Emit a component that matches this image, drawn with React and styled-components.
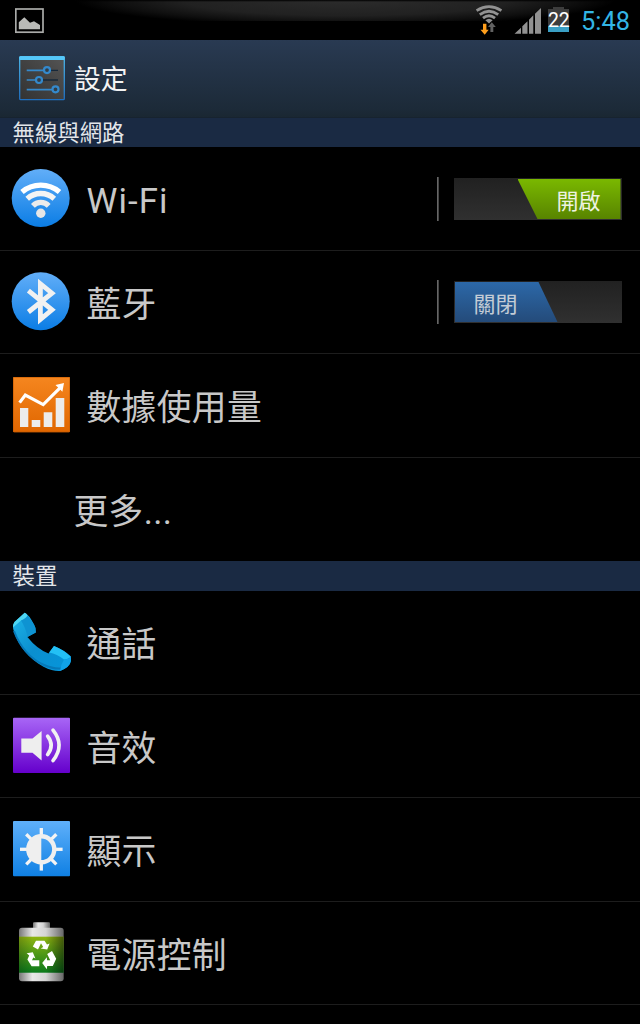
import React from 'react';
import styled, { createGlobalStyle } from 'styled-components';

const GlobalStyle = createGlobalStyle`
  html, body { margin: 0; background: #000; }
  body { font-family: Roboto, "Noto Sans CJK TC", sans-serif; overflow: hidden; }
  svg { display: block; flex: none; }
`;

const Screen = styled.main`
  width: 640px;
  height: 1024px;
  overflow: hidden;
  background: #000;
  display: flex;
  flex-direction: column;
`;

const StatusBar = styled.header`
  height: 40px;
  flex: none;
  box-sizing: border-box;
  display: flex;
  align-items: flex-start;
  justify-content: space-between;
  padding: 0 10px 0 15px;
  background:
    linear-gradient(#000, transparent 2px),
    linear-gradient(transparent 21px, #000 21px),
    radial-gradient(ellipse 270px 26px at 345px 0, #2c2c2c 0%, #212121 60%, rgba(18, 18, 18, 0.8) 85%, transparent 100%),
    #000;
`;

const StatusIcons = styled.div`
  display: flex;
  align-items: flex-start;
`;

const Clock = styled.time`
  width: 49px;
  margin-left: 12px;
  padding-top: 6px;
  font-size: 25.4px;
  line-height: 30px;
  color: #33b5e5;
  white-space: nowrap;
`;

const ActionBar = styled.div`
  height: 78px;
  flex: none;
  box-sizing: border-box;
  display: flex;
  align-items: flex-start;
  gap: 9px;
  padding: 16px 19px 0;
  background: linear-gradient(#293a52, #1c2a38 90%, #1a2732);
  border-bottom: 1px solid #17232f;
`;

const Title = styled.h1`
  margin: 0;
  font-size: 26.8px;
  line-height: 48px;
  font-weight: 400;
  color: #f3f3f3;
`;

const SectionHeader = styled.h2`
  margin: 0;
  height: ${p => p.$height}px;
  flex: none;
  padding-left: 12.5px;
  font-size: 22.4px;
  line-height: 31px;
  font-weight: 400;
  color: #e3e6ea;
  background: #1a2a43;
`;

const Row = styled.div`
  height: ${p => p.$height}px;
  flex: none;
  box-sizing: border-box;
  display: flex;
  align-items: flex-start;
  padding: 19px 18.5px 0 ${p => (p.$indent ? 73.5 : 9)}px;
  border-bottom: 1px solid ${p => (p.$last ? 'transparent' : '#1d1d1d')};
`;

const Label = styled.span`
  flex: 1;
  margin-left: ${p => (p.$indent ? 0 : 13.5)}px;
  font-size: 34.8px;
  line-height: 71px;
  letter-spacing: ${p => (p.$latin ? 1.1 : 0.3)}px;
  color: #c8c8c8;
`;

const Separator = styled.span`
  width: 2px;
  height: 44px;
  margin: ${p => (p.$on ? 11 : 10)}px 15px 0 0;
  background: linear-gradient(90deg, #777, #333);
`;

const Track = styled.span`
  width: 168px;
  height: 42px;
  margin-top: ${p => (p.$on ? 12 : 11)}px;
  box-sizing: border-box;
  display: flex;
  justify-content: ${p => (p.$on ? 'flex-end' : 'flex-start')};
  padding: 1px;
  background: linear-gradient(#212121, #303030);
`;

const Thumb = styled.span`
  width: 103px;
  box-sizing: border-box;
  padding-left: ${p => (p.$on ? 39 : 19)}px;
  font-size: 22px;
  line-height: 45px;
  color: ${p => (p.$on ? '#eef3e0' : '#c3ccd6')};
  background: ${p => (p.$on ? 'linear-gradient(#7ab800, #588400)' : 'linear-gradient(#2c68a8, #244b7a)')};
  clip-path: ${p => (p.$on ? 'polygon(0 0, 100% 0, 100% 40px, 20px 40px)' : 'polygon(0 0, 84px 0, 100% 40px, 0 40px)')};
`;

const Vertical = ({ id, from, to }) => (
  <linearGradient id={id} x1="0" y1="0" x2="0" y2="1">
    <stop offset="0" stopColor={from} />
    <stop offset="1" stopColor={to} />
  </linearGradient>
);

const IconBase = ({ children }) => (
  <svg width="64" height="64" viewBox="0 0 64 64">{children}</svg>
);

const WifiIcon = () => (
  <IconBase>
    <Vertical id="wifiBg" from="#62aef8" to="#0b7de5" />
    <circle cx="31.7" cy="32" r="29" fill="url(#wifiBg)" />
    <g fill="none" stroke="#f4f4f4" strokeWidth="5.3">
      <path d="M13 26A29 29 0 0 1 50.5 26" stroke="#fff" />
      <path d="M18.2 32.8A20 20 0 0 1 45.3 32.8" />
      <path d="M23.9 39.8A11 11 0 0 1 39.7 39.8" stroke="#ebebeb" />
    </g>
    <circle cx="31.8" cy="47.3" r="4.7" fill="#e6e6e6" />
  </IconBase>
);

const BluetoothIcon = () => (
  <IconBase>
    <Vertical id="btBg" from="#62aef8" to="#0b7de5" />
    <circle cx="31.7" cy="31.3" r="29" fill="url(#btBg)" />
    <path d="M19.4 20.7L43 39.8L31.4 49.4V13.7L43 23.2L19.4 42" fill="none" stroke="#f1f1f1" strokeWidth="4.8" />
  </IconBase>
);

const DataIcon = () => (
  <IconBase>
    <Vertical id="dataBg" from="#f5861f" to="#e06600" />
    <rect x="4" y="4" width="57" height="55.3" rx="1" fill="url(#dataBg)" />
    <rect x="4.5" y="4.5" width="56" height="54.3" rx="1" fill="none" stroke="#c85c00" strokeOpacity=".6" />
    <path d="M10.6 29.6L16.3 22L34.2 31.6L51.5 14.3" fill="none" stroke="#fff" strokeWidth="3.2" />
    <path d="M55 10L46.5 12L53.4 18.8Z" fill="#fff" />
    <path d="M11 35h8.3v19H11zM22.7 47h8.6v7h-8.6zM34.7 39.3h8.6V54h-8.6zM46.7 25h8.6v29h-8.6z" fill="#ececec" />
  </IconBase>
);

const PhoneIcon = () => (
  <IconBase>
    <linearGradient id="phoneBody" x1="0" y1="0" x2="1" y2="1">
      <stop offset="0" stopColor="#1eb3e8" />
      <stop offset=".5" stopColor="#0b8fcf" />
      <stop offset="1" stopColor="#0596dc" />
    </linearGradient>
    <path d="M15.7 2.7L5.5 12Q3.2 15.5 4.5 20C8 34 20 49 34.5 56.7Q44 61.5 51 61Q61 57 62 51V46.5Q55 40 45 36L39.5 43.5Q28 39 18.4 27L26.8 22.5Q27.2 18 25 14.5Q20 4.5 15.7 2.7Z" fill="url(#phoneBody)" />
    <path d="M15.7 2.7L5.5 12Q3.8 14.5 4 17.5L12 10.5Q17.5 8.5 18.5 5.5Q17.5 3.5 15.7 2.7Z" fill="#4ed6f2" />
    <path d="M45 36L40.2 42.6Q48 44 55 49.5Q60 49 61.5 46.5Q55 40 45 36Z" fill="#23c0f5" />
    <path d="M18.5 5.5Q17 8.5 12 10.5Q17 18 18.4 27L26.8 22.5Q27.2 18 25 14.5Z" fill="#0e93d2" />
    <path d="M5 21C11 37 22 49 35 55Q44 59 52 58.5" fill="none" stroke="#0679b9" strokeWidth="2" />
    <path d="M61.8 47V51Q61 57 51 61Q52 54 55 49.5Q60 49 61.8 47Z" fill="#10a3e8" />
  </IconBase>
);

const SoundIcon = () => (
  <IconBase>
    <Vertical id="soundBg" from="#a866f6" to="#6500cc" />
    <rect x="4" y="3.7" width="57" height="55.3" rx="1" fill="url(#soundBg)" />
    <path d="M12.3 24.5H23.5L32.6 17V46.5L23.5 38.8H12.3Z" fill="#eee" />
    <path d="M38.6 22.2Q45.8 31.4 38.6 40.7M44 16.2Q56.2 31.4 44 46.6" fill="none" stroke="#f1f1f1" strokeWidth="3.6" strokeLinecap="round" />
  </IconBase>
);

const RAY_ANGLES = [0, 45, 90, 135, 180, 225, 270, 315];

const DisplayIcon = () => (
  <IconBase>
    <Vertical id="displayBg" from="#5fb0fa" to="#0f80e4" />
    <rect x="4" y="4" width="57" height="55.2" rx="1" fill="url(#displayBg)" />
    {RAY_ANGLES.map(a => (
      <path key={a} d="M32.3 18V11" stroke="#f4f4f4" strokeWidth="3.3" transform={`rotate(${a} 32.3 32.3)`} />
    ))}
    <circle cx="32.3" cy="32.3" r="13" fill="none" stroke="#efefef" strokeWidth="4.4" />
    <path d="M32.3 18A14.3 14.3 0 0 0 32.3 46.6Z" fill="#efefef" />
  </IconBase>
);

const BatteryIcon = () => (
  <IconBase>
    <linearGradient id="metal">
      <stop offset="0" stopColor="#777" />
      <stop offset=".3" stopColor="#e8e8e8" />
      <stop offset=".6" stopColor="#d5d5d5" />
      <stop offset="1" stopColor="#666" />
    </linearGradient>
    <Vertical id="charge" from="#8fb512" to="#0b7a1c" />
    <linearGradient id="shade">
      <stop offset="0" stopColor="#000" stopOpacity=".2" />
      <stop offset=".3" stopColor="#000" stopOpacity="0" />
      <stop offset=".6" stopColor="#000" stopOpacity="0" />
      <stop offset="1" stopColor="#000" stopOpacity=".5" />
    </linearGradient>
    <rect x="24" y="1.3" width="17" height="7" rx="1" fill="url(#metal)" />
    <rect x="10" y="6.7" width="44.7" height="53.6" rx="3" fill="url(#metal)" />
    <rect x="10" y="15.7" width="44.7" height="36" fill="url(#charge)" />
    <rect x="10" y="15.7" width="44.7" height="36" fill="url(#shade)" />
    <g fill="#fff">
      <path d="M23.8 25.4L27 19.8H35.5L38 23.6L40.6 22.6L38.2 28.6L31.7 27.5L34.2 26L32 22.3L29 28.4Z" />
      <path d="M17.7 32.3L23.8 31.3L26.4 37.6L24.3 36.6L23 39.3H30.3V45.2H22.6L18.4 38.4L20.2 34.6Z" />
      <path d="M38.2 33L43 30L47.2 37.8L43.8 45H38.2L37.8 48.2L33.2 42L37.8 36.2L38.1 39.2H41.2Z" />
    </g>
  </IconBase>
);

const SettingsIcon = () => (
  <svg width="46" height="44.5" viewBox="0 0 46 44.5">
    <linearGradient id="panel" x1="0" y1="1" x2="1" y2="0">
      <stop offset="0" stopColor="#333" />
      <stop offset=".5" stopColor="#424242" />
      <stop offset="1" stopColor="#555" />
    </linearGradient>
    <Vertical id="frame" from="#4cb8ec" to="#1f6fc0" />
    <rect x=".7" y=".7" width="44.6" height="43" rx="1" fill="url(#panel)" stroke="url(#frame)" strokeWidth="1.3" />
    <rect x=".3" y=".2" width="45.4" height="3.9" rx="1" fill="#55c8fa" />
    <path d="M28 14.4H39M20 24H39" stroke="#17283a" strokeWidth="1.3" />
    <path d="M7.7 14.4H28M7.7 24H20M7.7 33.6H36" stroke="#3489cc" strokeWidth="1.6" />
    <g fill="#333d46" stroke="#3489cc" strokeWidth="2.2">
      <circle cx="28" cy="14.1" r="3" />
      <circle cx="20" cy="24" r="3" />
      <circle cx="36.5" cy="33.3" r="3" />
    </g>
  </svg>
);

const PictureIcon = () => (
  <svg width="29" height="40" viewBox="0 0 29 40">
    <rect x=".8" y="9" width="27.2" height="23.2" fill="none" stroke="#aaaba9" strokeWidth="1.7" />
    <path d="M3.8 29.3V22.3L9.3 17.3L15 22.8L19 21.3L25 25V29.3Z" fill="#b9bab7" />
  </svg>
);

const StatusWifi = () => (
  <svg width="28" height="40" viewBox="476 0 28 40">
    <g fill="none" stroke="#929292" strokeWidth="2.8">
      <path d="M477.6 10.6Q490 2.8 502.4 10.6" />
      <path d="M480.8 14.6Q490 8 499.2 14.6" />
      <path d="M484 18.2Q490 13.4 496 18.2" />
    </g>
    <path d="M486.4 20.2Q490 17.2 493.6 20.2L490 23.5Z" fill="#929292" />
    <path d="M484 23.8H487.4V29.8H489.7L485.7 34.7L481.5 29.8H484Z" fill="#ff9f1c" />
    <path d="M491.4 32V27H489L492.8 22.3L496.8 27H494.3V32Z" fill="#626262" />
  </svg>
);

const Signal = () => (
  <svg width="27" height="40" viewBox="514 0 27 40">
    <path d="M514.5 33.7L521 27.7V33.7ZM522.3 33.7V26.3L527.5 21.2V33.7ZM529 33.7V19.7L533.3 15.3V33.7ZM535 33.7V13.7L541 8V33.7Z" fill="#929292" />
  </svg>
);

const BatteryBadge = styled.span`
  width: 21px;
  height: 25px;
  margin: 7px 0 0 7px;
  font-size: 19.5px;
  line-height: 28px;
  letter-spacing: -0.3px;
  text-align: center;
  color: #fff;
  background:
    linear-gradient(#3a9fc4, #3a9fc4) 0 19px / 21px 6px no-repeat,
    linear-gradient(#3d3d3d, #3d3d3d) 0 2px / 21px 17px no-repeat,
    linear-gradient(#3d3d3d, #3d3d3d) 5px 0 / 11px 2px no-repeat;
`;

const WifiSlot = styled.span`
  margin-right: 11px;
`;

const Toggle = ({ on, text }) => (
  <>
    <Separator $on={on} />
    <Track $on={on}><Thumb $on={on}>{text}</Thumb></Track>
  </>
);

const NETWORK_ROWS = [
  { label: 'Wi-Fi', latin: true, icon: <WifiIcon />, height: 104, toggle: { on: true, text: '開啟' } },
  { label: '藍牙', icon: <BluetoothIcon />, height: 103, toggle: { on: false, text: '關閉' } },
  { label: '數據使用量', icon: <DataIcon />, height: 104 },
  { label: '更多...', height: 103, last: true },
];

const DEVICE_ROWS = [
  { label: '通話', icon: <PhoneIcon />, height: 104 },
  { label: '音效', icon: <SoundIcon />, height: 103 },
  { label: '顯示', icon: <DisplayIcon />, height: 104 },
  { label: '電源控制', icon: <BatteryIcon />, height: 103 },
];

const SettingRow = ({ label, latin, icon, height, toggle, last }) => (
  <Row $height={height} $indent={!icon} $last={last}>
    {icon}
    <Label $indent={!icon} $latin={latin}>{label}</Label>
    {toggle && <Toggle {...toggle} />}
  </Row>
);

export default function App() {
  return (
    <Screen>
      <GlobalStyle />
      <StatusBar>
        <PictureIcon />
        <StatusIcons>
          <WifiSlot><StatusWifi /></WifiSlot>
          <Signal />
          <BatteryBadge>22</BatteryBadge>
          <Clock>5:48</Clock>
        </StatusIcons>
      </StatusBar>
      <ActionBar>
        <SettingsIcon />
        <Title>設定</Title>
      </ActionBar>
      <SectionHeader $height={29}>無線與網路</SectionHeader>
      {NETWORK_ROWS.map(r => <SettingRow key={r.label} {...r} />)}
      <SectionHeader $height={30}>裝置</SectionHeader>
      {DEVICE_ROWS.map(r => <SettingRow key={r.label} {...r} />)}
    </Screen>
  );
}
